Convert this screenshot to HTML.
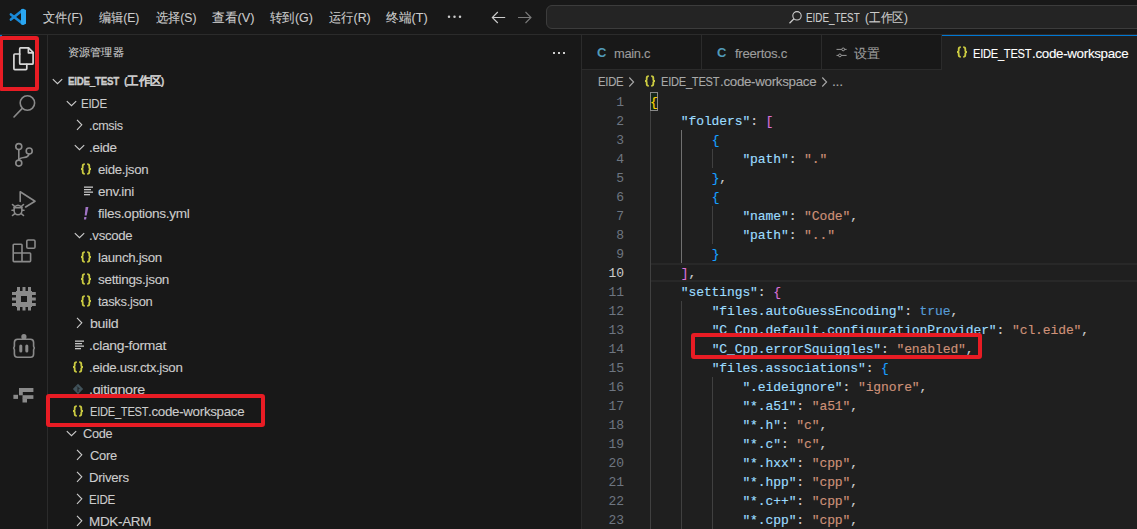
<!DOCTYPE html>
<html><head><meta charset="utf-8">
<style>
*{box-sizing:border-box}
html,body{margin:0;padding:0}
body{width:1137px;height:529px;overflow:hidden;background:#181818;position:relative;font-family:"Liberation Sans",sans-serif;color:#cccccc}
.a{position:absolute}
.ui{position:absolute;font-size:12.5px;letter-spacing:-0.3px;white-space:nowrap;line-height:22px;height:22px;-webkit-text-stroke:0.1px currentColor}
.menu{position:absolute;top:6px;height:22px;line-height:22px;font-size:12.5px;color:#cccccc;white-space:nowrap}
.code{position:absolute;left:650px;font-family:"Liberation Mono",monospace;font-size:13px;letter-spacing:-0.1px;white-space:pre;line-height:19px;color:#cccccc;-webkit-text-stroke:0.15px currentColor}
.ln{position:absolute;left:582px;width:42px;text-align:right;font-family:"Liberation Mono",monospace;font-size:13px;letter-spacing:-0.1px;line-height:19px;color:#6e7681}
.k{color:#9cdcfe}.s{color:#ce9178}.b1{color:#ffd700}.b2{color:#da70d6}.b3{color:#179fff}.kw{color:#569cd6}
.guide{position:absolute;width:1px;background:#404040}
.redbox{position:absolute;border:4px solid #e81c24;border-radius:3px}
</style></head><body>
<div class="a" style="left:0;top:34px;width:1137px;height:1px;background:#2b2b2b"></div>
<svg class="a" style="left:0;top:0" width="40" height="34" viewBox="0 0 40 34">
  <g stroke="#1a8ad8" stroke-width="2.6" stroke-linecap="round"><path d="M10.9 14.4 L22.5 23.6"/><path d="M10.9 19.6 L22.5 10.2"/></g>
  <path d="M21 9.6 L23.3 8.7 L26 10 V23.8 L23.3 25.1 L21 24.2 Z" fill="#2aa6f0"/>
</svg>
<div class="ui" style="left:43.2px;top:7px;color:#cccccc;font-size:13px;letter-spacing:0px;transform:scaleX(0.9368);transform-origin:0 0">文件(F)</div>
<div class="ui" style="left:99.0px;top:7px;color:#cccccc;font-size:13px;letter-spacing:0px;transform:scaleX(0.9302);transform-origin:0 0">编辑(E)</div>
<div class="ui" style="left:155.8px;top:7px;color:#cccccc;font-size:13px;letter-spacing:0px;transform:scaleX(0.9349);transform-origin:0 0">选择(S)</div>
<div class="ui" style="left:212.2px;top:7px;color:#cccccc;font-size:13px;letter-spacing:0px;transform:scaleX(0.9837);transform-origin:0 0">查看(V)</div>
<div class="ui" style="left:270.3px;top:7px;color:#cccccc;font-size:13px;letter-spacing:0px;transform:scaleX(0.9586);transform-origin:0 0">转到(G)</div>
<div class="ui" style="left:329.2px;top:7px;color:#cccccc;font-size:13px;letter-spacing:0px;transform:scaleX(0.947);transform-origin:0 0">运行(R)</div>
<div class="ui" style="left:386.2px;top:7px;color:#cccccc;font-size:13px;letter-spacing:0px;transform:scaleX(0.9771);transform-origin:0 0">终端(T)</div>
<svg class="a" style="left:440px;top:10px" width="30" height="14" viewBox="440 10 30 14"><g fill="#cccccc"><circle cx="449" cy="16.7" r="1.25"/><circle cx="454.5" cy="16.7" r="1.25"/><circle cx="460" cy="16.7" r="1.25"/></g></svg>
<svg class="a" style="left:480px;top:0" width="60" height="34" viewBox="480 0 60 34"><path d="M497.8 12 L492.3 17.5 L497.8 23 M492.5 17.5 H505.2" fill="none" stroke="#cccccc" stroke-width="1.1"/><path d="M525.5 12 L531 17.5 L525.5 23 M530.8 17.5 H518" fill="none" stroke="#7a7a7a" stroke-width="1.1"/></svg>
<div class="a" style="left:546px;top:5px;width:620px;height:24px;background:#242424;border:1px solid #3c3c3c;border-radius:6px"></div>
<svg class="a" style="left:788px;top:10px" width="15" height="15" viewBox="0 0 15 15"><circle cx="9" cy="5.8" r="4.2" fill="none" stroke="#cccccc" stroke-width="1.1"/><path d="M6 8.8 L1.5 13.3" stroke="#cccccc" stroke-width="1.3"/></svg>
<div class="ui" style="left:806.24px;top:7px;color:#cccccc;font-size:13px;letter-spacing:0px;transform:scaleX(0.7587);transform-origin:0 0">EIDE_TEST</div>
<div class="ui" style="left:865.0px;top:7px;color:#cccccc;font-size:13px;letter-spacing:0px;transform:scaleX(0.898);transform-origin:0 0">(工作区)</div>
<div class="a" style="left:47px;top:35px;width:1px;height:494px;background:#2b2b2b"></div>
<div class="a" style="left:0;top:35px;width:2px;height:48px;background:#0078d4"></div>
<svg class="a" style="left:0;top:35px" width="48" height="400" viewBox="0 35 48 400" fill="none" stroke-linejoin="round" stroke-linecap="round">
  <g stroke="#d7d7d7" stroke-width="1.7">
    <path d="M20.5 47.9 H28.6 L33.1 52.4 V63.2 Q33.1 64.2 32.1 64.2 H20.5 Q19.7 64.2 19.7 63.2 V48.9 Q19.7 47.9 20.5 47.9 Z"/>
    <path d="M28.4 48.2 V52.8 H33"/>
    <path d="M19.7 54 H14.8 Q13.9 54 13.9 55 V68.6 Q13.9 69.6 14.8 69.6 H25.8 Q26.8 69.6 26.8 68.6 V64.3"/>
  </g>
  <g stroke="#8a8a8a" stroke-width="1.6">
    <circle cx="27.4" cy="103" r="7.2"/>
    <path d="M22 108.6 L14 117"/>
  </g>
  <g stroke="#8a8a8a" stroke-width="1.6">
    <circle cx="18.8" cy="146.6" r="3.0"/>
    <circle cx="29.2" cy="151" r="3.0"/>
    <circle cx="18.8" cy="163.1" r="3.0"/>
    <path d="M18.8 149.6 V160.1"/>
    <path d="M29 154 Q28.5 157 24 157.5 Q19.5 158 18.8 160"/>
  </g>
  <g stroke="#8a8a8a" stroke-width="1.6">
    <path d="M20.2 201.4 V191.8 L35 201.2 L25.6 207"/>
    <ellipse cx="18" cy="210" rx="4" ry="4.8"/>
    <path d="M14 207.6 H22 M12.5 204.5 L14.5 206.3 M23.5 204.5 L21.5 206.3 M12 210.2 H14 M22 210.2 H24 M12.5 215.5 L14.5 213.8 M23.5 215.5 L21.5 213.8"/>
  </g>
  <g stroke="#8a8a8a" stroke-width="1.6">
    <rect x="26.8" y="240" width="8.2" height="8.2" rx="1.3"/>
    <path d="M22 253 V245 Q22 244.3 21.2 244.3 H14 Q13.2 244.3 13.2 245 V260.8 Q13.2 261.6 14 261.6 H29.8 Q30.6 261.6 30.6 260.8 V253.8 Q30.6 253 29.8 253 H13.2 M22 253 V261.6"/>
  </g>
  <g fill="#8a8a8a" stroke="none">
    <path fill-rule="evenodd" d="M16 291 H32 V307 H16 Z M21 296 V302 H27 V296 Z"/>
    <rect x="17" y="287" width="3" height="4"/><rect x="22.5" y="287" width="3" height="4"/><rect x="28" y="287" width="3" height="4"/>
    <rect x="17" y="307" width="3" height="3.5"/><rect x="22.5" y="307" width="3" height="3.5"/><rect x="28" y="307" width="3" height="3.5"/>
    <rect x="12" y="292" width="4" height="3"/><rect x="12" y="297.5" width="4" height="3"/><rect x="12" y="303" width="4" height="3"/>
    <rect x="32" y="292" width="3.8" height="3"/><rect x="32" y="297.5" width="3.8" height="3"/><rect x="32" y="303" width="3.8" height="3"/>
  </g>
  <g stroke="#8a8a8a" stroke-width="1.6">
    <path d="M17.5 339.2 H30.5 Q33.6 339.2 33.6 342.5 V346.3 L34.3 348 L33.6 349.8 V354 Q33.6 357.3 30.5 357.3 H17.5 Q14.4 357.3 14.4 354 V349.8 L13.7 348 L14.4 346.3 V342.5 Q14.4 339.2 17.5 339.2 Z"/>
  </g>
  <g fill="#8a8a8a">
    <rect x="21.3" y="334" width="5.2" height="5.5" rx="2.5"/>
    <rect x="19.3" y="344.5" width="3" height="8" rx="1.5"/>
    <rect x="25.3" y="344.5" width="3" height="8" rx="1.5"/>
  </g>
  <g fill="#8a8a8a">
    <rect x="19" y="388" width="14.4" height="4"/>
    <rect x="19" y="391.5" width="3.8" height="3.8"/>
    <rect x="22.5" y="395.2" width="10.9" height="3.7"/>
    <rect x="22.5" y="398.5" width="4.5" height="4"/>
    <rect x="13.4" y="394.8" width="4.6" height="4.1"/>
  </g>
</svg>
<div class="redbox" style="left:-1px;top:36px;width:40px;height:55px"></div>
<div class="a" style="left:582px;top:69px;width:555px;height:1px;background:#2b2b2b"></div>
<div class="a" style="left:582px;top:70px;width:555px;height:459px;background:#1f1f1f"></div>
<div class="a" style="left:701px;top:35px;width:1px;height:34px;background:#2b2b2b"></div>
<div class="a" style="left:821px;top:35px;width:1px;height:34px;background:#2b2b2b"></div>
<div class="a" style="left:941px;top:35px;width:1px;height:34px;background:#2b2b2b"></div>
<div class="a" style="left:942px;top:35px;width:195px;height:35px;background:#1f1f1f"></div>
<div class="a" style="left:942px;top:35px;width:195px;height:1px;background:#0078d4"></div>
<div class="a" style="left:597px;top:42px;font-size:13px;font-weight:bold;color:#519aba;line-height:22px">C</div>
<div class="ui" style="left:614.3px;top:43px;color:#9d9d9d;font-size:13px;letter-spacing:-0.3px;transform:scaleX(0.9896);transform-origin:0 0">main.c</div>
<div class="a" style="left:717px;top:42px;font-size:13px;font-weight:bold;color:#519aba;line-height:22px">C</div>
<div class="ui" style="left:734.6px;top:43px;color:#9d9d9d;font-size:13px;letter-spacing:-0.3px;transform:scaleX(1.0157);transform-origin:0 0">freertos.c</div>
<svg class="a" style="left:836px;top:46px" width="12" height="12" viewBox="0 0 12 12"><g stroke="#a8a8a8" stroke-width="0.9" fill="none"><path d="M0.5 3.4 H5.7 M8.7 3.4 H10.6 M0.5 9.4 H2.4 M5.4 9.4 H10.6"/><circle cx="7.2" cy="3.4" r="1.4"/><circle cx="3.9" cy="9.4" r="1.4"/></g></svg>
<div class="ui" style="left:854.0px;top:43px;color:#9d9d9d;font-size:13px;letter-spacing:0px">设置</div>
<svg class="a" style="left:956px;top:46px" width="13" height="13" viewBox="0 0 13 13"><g fill="none" stroke="#cbcb41" stroke-width="1.8"><path d="M4.8 1.2 Q2.7 1.2 2.7 3 V4.7 Q2.7 6 1 6 Q2.7 6 2.7 7.3 V9 Q2.7 10.9 4.8 10.9"/><path d="M7.2 1.2 Q9.3 1.2 9.3 3 V4.7 Q9.3 6 11 6 Q9.3 6 9.3 7.3 V9 Q9.3 10.9 7.2 10.9"/></g></svg>
<div class="ui" style="left:973.34px;top:43px;color:#ffffff;font-size:13px;letter-spacing:-0.3px;transform:scaleX(0.8554);transform-origin:0 0">EIDE_TEST</div>
<div class="ui" style="left:1031.57px;top:43px;color:#ffffff;font-size:13px;letter-spacing:-0.3px;transform:scaleX(1.0276);transform-origin:0 0">.code-workspace</div>
<div class="ui" style="left:597.53px;top:71px;color:#a9a9a9;font-size:13px;letter-spacing:-0.3px;transform:scaleX(0.8689);transform-origin:0 0">EIDE</div>
<svg class="a" style="left:628px;top:76px" width="8" height="12" viewBox="0 0 8 12"><path d="M1.3 1.5 L5.6 6 L1.3 10.5" fill="none" stroke="#a9a9a9" stroke-width="1.1"/></svg>
<svg class="a" style="left:644px;top:75px" width="13" height="13" viewBox="0 0 13 13"><g fill="none" stroke="#cbcb41" stroke-width="1.8"><path d="M4.8 1.2 Q2.7 1.2 2.7 3 V4.7 Q2.7 6 1 6 Q2.7 6 2.7 7.3 V9 Q2.7 10.9 4.8 10.9"/><path d="M7.2 1.2 Q9.3 1.2 9.3 3 V4.7 Q9.3 6 11 6 Q9.3 6 9.3 7.3 V9 Q9.3 10.9 7.2 10.9"/></g></svg>
<div class="ui" style="left:661.34px;top:71px;color:#a9a9a9;font-size:13px;letter-spacing:-0.3px;transform:scaleX(0.8554);transform-origin:0 0">EIDE_TEST</div>
<div class="ui" style="left:719.57px;top:71px;color:#a9a9a9;font-size:13px;letter-spacing:-0.3px;transform:scaleX(1.0265);transform-origin:0 0">.code-workspace</div>
<svg class="a" style="left:821px;top:76px" width="8" height="12" viewBox="0 0 8 12"><path d="M1.3 1.5 L5.6 6 L1.3 10.5" fill="none" stroke="#a9a9a9" stroke-width="1.1"/></svg>
<div class="ui" style="left:831.92px;top:71px;color:#a9a9a9;font-size:13px;letter-spacing:-0.3px;transform:scaleX(1.0784);transform-origin:0 0">...</div>
<div class="a" style="left:650px;top:263px;width:487px;height:19px;border-top:2px solid #282828;border-bottom:2px solid #282828"></div>
<div class="guide" style="left:650px;top:111px;height:418px;background:#404040"></div>
<div class="guide" style="left:681px;top:130px;height:133px;background:#707070"></div>
<div class="guide" style="left:681px;top:301px;height:228px;background:#404040"></div>
<div class="guide" style="left:712px;top:149px;height:19px;background:#404040"></div>
<div class="guide" style="left:712px;top:206px;height:38px;background:#404040"></div>
<div class="guide" style="left:712px;top:377px;height:152px;background:#404040"></div>
<div class="a" style="left:650px;top:92px;width:8px;height:19px;border:1px solid #888888;background:#16261a"></div>
<div class="ln" style="top:93px;color:#6e7681">1</div>
<div class="code" style="top:93px"><span class="b1">{</span></div>
<div class="ln" style="top:112px;color:#6e7681">2</div>
<div class="code" style="top:112px">    <span class="k">"folders"</span>: <span class="b2">[</span></div>
<div class="ln" style="top:131px;color:#6e7681">3</div>
<div class="code" style="top:131px">        <span class="b3">{</span></div>
<div class="ln" style="top:150px;color:#6e7681">4</div>
<div class="code" style="top:150px">            <span class="k">"path"</span>: <span class="s">"."</span></div>
<div class="ln" style="top:169px;color:#6e7681">5</div>
<div class="code" style="top:169px">        <span class="b3">}</span>,</div>
<div class="ln" style="top:188px;color:#6e7681">6</div>
<div class="code" style="top:188px">        <span class="b3">{</span></div>
<div class="ln" style="top:207px;color:#6e7681">7</div>
<div class="code" style="top:207px">            <span class="k">"name"</span>: <span class="s">"Code"</span>,</div>
<div class="ln" style="top:226px;color:#6e7681">8</div>
<div class="code" style="top:226px">            <span class="k">"path"</span>: <span class="s">".."</span></div>
<div class="ln" style="top:245px;color:#6e7681">9</div>
<div class="code" style="top:245px">        <span class="b3">}</span></div>
<div class="ln" style="top:264px;color:#cccccc">10</div>
<div class="code" style="top:264px">    <span class="b2">]</span>,</div>
<div class="ln" style="top:283px;color:#6e7681">11</div>
<div class="code" style="top:283px">    <span class="k">"settings"</span>: <span class="b2">{</span></div>
<div class="ln" style="top:302px;color:#6e7681">12</div>
<div class="code" style="top:302px">        <span class="k">"files.autoGuessEncoding"</span>: <span class="kw">true</span>,</div>
<div class="ln" style="top:321px;color:#6e7681">13</div>
<div class="code" style="top:321px">        <span class="k">"C_Cpp.default.configurationProvider"</span>: <span class="s">"cl.eide"</span>,</div>
<div class="ln" style="top:340px;color:#6e7681">14</div>
<div class="code" style="top:340px">        <span class="k">"C_Cpp.errorSquiggles"</span>: <span class="s">"enabled"</span>,</div>
<div class="ln" style="top:359px;color:#6e7681">15</div>
<div class="code" style="top:359px">        <span class="k">"files.associations"</span>: <span class="b3">{</span></div>
<div class="ln" style="top:378px;color:#6e7681">16</div>
<div class="code" style="top:378px">            <span class="k">".eideignore"</span>: <span class="s">"ignore"</span>,</div>
<div class="ln" style="top:397px;color:#6e7681">17</div>
<div class="code" style="top:397px">            <span class="k">"*.a51"</span>: <span class="s">"a51"</span>,</div>
<div class="ln" style="top:416px;color:#6e7681">18</div>
<div class="code" style="top:416px">            <span class="k">"*.h"</span>: <span class="s">"c"</span>,</div>
<div class="ln" style="top:435px;color:#6e7681">19</div>
<div class="code" style="top:435px">            <span class="k">"*.c"</span>: <span class="s">"c"</span>,</div>
<div class="ln" style="top:454px;color:#6e7681">20</div>
<div class="code" style="top:454px">            <span class="k">"*.hxx"</span>: <span class="s">"cpp"</span>,</div>
<div class="ln" style="top:473px;color:#6e7681">21</div>
<div class="code" style="top:473px">            <span class="k">"*.hpp"</span>: <span class="s">"cpp"</span>,</div>
<div class="ln" style="top:492px;color:#6e7681">22</div>
<div class="code" style="top:492px">            <span class="k">"*.c++"</span>: <span class="s">"cpp"</span>,</div>
<div class="ln" style="top:511px;color:#6e7681">23</div>
<div class="code" style="top:511px">            <span class="k">"*.cpp"</span>: <span class="s">"cpp"</span>,</div>
<div class="redbox" style="left:691px;top:333px;width:291px;height:26px"></div>
<div class="a" style="left:581px;top:35px;width:1px;height:494px;background:#2b2b2b"></div>
<div class="ui" style="left:68.0px;top:41px;color:#cccccc;font-size:11px;letter-spacing:0px;transform:scaleX(1.0127);transform-origin:0 0">资源管理器</div>
<div class="a" style="left:553px;top:52px;width:2px;height:2px;background:#cccccc"></div>
<div class="a" style="left:558px;top:52px;width:2px;height:2px;background:#cccccc"></div>
<div class="a" style="left:563px;top:52px;width:2px;height:2px;background:#cccccc"></div>
<div class="ui" style="left:68.4px;top:70px;color:#cccccc;font-size:11.5px;letter-spacing:-0.3px;font-weight:bold;transform:scaleX(0.8505);transform-origin:0 0;-webkit-text-stroke:0.35px currentColor">EIDE_TEST</div>
<div class="ui" style="left:124.4px;top:70px;color:#cccccc;font-size:11.5px;letter-spacing:-0.3px;font-weight:bold;transform:scaleX(0.9524);transform-origin:0 0">(工作区)</div>
<svg class="a" style="left:52px;top:75px" width="11" height="11" viewBox="0 0 11 11"><path d="M0.8 4.1 L5.5 8.7 L10.2 4.1" fill="none" stroke="#cccccc" stroke-width="1.1"/></svg>
<div class="ui" style="left:81.41px;top:93px;color:#cccccc;font-size:13px;letter-spacing:-0.3px;transform:scaleX(0.8863);transform-origin:0 0">EIDE</div>
<svg class="a" style="left:66px;top:97px" width="11" height="11" viewBox="0 0 11 11"><path d="M0.8 4.1 L5.5 8.7 L10.2 4.1" fill="none" stroke="#cccccc" stroke-width="1.1"/></svg>
<div class="ui" style="left:89.44px;top:115px;color:#cccccc;font-size:13px;letter-spacing:-0.3px;transform:scaleX(0.9647);transform-origin:0 0">.cmsis</div>
<svg class="a" style="left:76px;top:119px" width="8" height="12" viewBox="0 0 8 12"><path d="M1 0.8 L5.8 5.8 L1 10.8" fill="none" stroke="#cccccc" stroke-width="1.1"/></svg>
<div class="ui" style="left:89.36px;top:137px;color:#cccccc;font-size:13px;letter-spacing:-0.3px;transform:scaleX(1.0404);transform-origin:0 0">.eide</div>
<svg class="a" style="left:74px;top:141px" width="11" height="11" viewBox="0 0 11 11"><path d="M0.8 4.1 L5.5 8.7 L10.2 4.1" fill="none" stroke="#cccccc" stroke-width="1.1"/></svg>
<div class="ui" style="left:98.0px;top:159px;color:#cccccc;font-size:13px;letter-spacing:-0.3px;transform:scaleX(1.0201);transform-origin:0 0">eide.json</div>
<svg class="a" style="left:80px;top:163px" width="13" height="13" viewBox="0 0 13 13"><g fill="none" stroke="#cbcb41" stroke-width="1.8"><path d="M4.8 1.2 Q2.7 1.2 2.7 3 V4.7 Q2.7 6 1 6 Q2.7 6 2.7 7.3 V9 Q2.7 10.9 4.8 10.9"/><path d="M7.2 1.2 Q9.3 1.2 9.3 3 V4.7 Q9.3 6 11 6 Q9.3 6 9.3 7.3 V9 Q9.3 10.9 7.2 10.9"/></g></svg>
<div class="ui" style="left:98.0px;top:181px;color:#cccccc;font-size:13px;letter-spacing:-0.3px;transform:scaleX(1.0422);transform-origin:0 0">env.ini</div>
<svg class="a" style="left:84px;top:186px" width="10" height="10" viewBox="0 0 10 10"><g fill="#c5c5c5"><rect x="0" y="0.5" width="9" height="1.3"/><rect x="0" y="3" width="7" height="1.3"/><rect x="0" y="5.5" width="9" height="1.3"/><rect x="0" y="8" width="6" height="1.3"/></g></svg>
<div class="ui" style="left:98.0px;top:203px;color:#cccccc;font-size:13px;letter-spacing:-0.3px;transform:scaleX(1.0479);transform-origin:0 0">files.options.yml</div>
<svg class="a" style="left:83px;top:207px" width="6" height="13" viewBox="0 0 6 13"><path d="M2.6 0 H5.4 L3.7 8.6 H1.7 Z M1.3 10 H3.5 L3.1 12.4 H0.9 Z" fill="#a074c4"/></svg>
<div class="ui" style="left:89.38px;top:225px;color:#cccccc;font-size:13px;letter-spacing:-0.3px;transform:scaleX(1.015);transform-origin:0 0">.vscode</div>
<svg class="a" style="left:74px;top:229px" width="11" height="11" viewBox="0 0 11 11"><path d="M0.8 4.1 L5.5 8.7 L10.2 4.1" fill="none" stroke="#cccccc" stroke-width="1.1"/></svg>
<div class="ui" style="left:98.0px;top:247px;color:#cccccc;font-size:13px;letter-spacing:-0.3px;transform:scaleX(1.0218);transform-origin:0 0">launch.json</div>
<svg class="a" style="left:80px;top:251px" width="13" height="13" viewBox="0 0 13 13"><g fill="none" stroke="#cbcb41" stroke-width="1.8"><path d="M4.8 1.2 Q2.7 1.2 2.7 3 V4.7 Q2.7 6 1 6 Q2.7 6 2.7 7.3 V9 Q2.7 10.9 4.8 10.9"/><path d="M7.2 1.2 Q9.3 1.2 9.3 3 V4.7 Q9.3 6 11 6 Q9.3 6 9.3 7.3 V9 Q9.3 10.9 7.2 10.9"/></g></svg>
<div class="ui" style="left:98.0px;top:269px;color:#cccccc;font-size:13px;letter-spacing:-0.3px;transform:scaleX(1.039);transform-origin:0 0">settings.json</div>
<svg class="a" style="left:80px;top:273px" width="13" height="13" viewBox="0 0 13 13"><g fill="none" stroke="#cbcb41" stroke-width="1.8"><path d="M4.8 1.2 Q2.7 1.2 2.7 3 V4.7 Q2.7 6 1 6 Q2.7 6 2.7 7.3 V9 Q2.7 10.9 4.8 10.9"/><path d="M7.2 1.2 Q9.3 1.2 9.3 3 V4.7 Q9.3 6 11 6 Q9.3 6 9.3 7.3 V9 Q9.3 10.9 7.2 10.9"/></g></svg>
<div class="ui" style="left:98.0px;top:291px;color:#cccccc;font-size:13px;letter-spacing:-0.3px;transform:scaleX(0.9932);transform-origin:0 0">tasks.json</div>
<svg class="a" style="left:80px;top:295px" width="13" height="13" viewBox="0 0 13 13"><g fill="none" stroke="#cbcb41" stroke-width="1.8"><path d="M4.8 1.2 Q2.7 1.2 2.7 3 V4.7 Q2.7 6 1 6 Q2.7 6 2.7 7.3 V9 Q2.7 10.9 4.8 10.9"/><path d="M7.2 1.2 Q9.3 1.2 9.3 3 V4.7 Q9.3 6 11 6 Q9.3 6 9.3 7.3 V9 Q9.3 10.9 7.2 10.9"/></g></svg>
<div class="ui" style="left:90.4px;top:313px;color:#cccccc;font-size:13px;letter-spacing:-0.3px;transform:scaleX(1.0908);transform-origin:0 0">build</div>
<svg class="a" style="left:76px;top:317px" width="8" height="12" viewBox="0 0 8 12"><path d="M1 0.8 L5.8 5.8 L1 10.8" fill="none" stroke="#cccccc" stroke-width="1.1"/></svg>
<div class="ui" style="left:89.33px;top:335px;color:#cccccc;font-size:13px;letter-spacing:-0.3px;transform:scaleX(1.0691);transform-origin:0 0">.clang-format</div>
<svg class="a" style="left:75px;top:340px" width="10" height="10" viewBox="0 0 10 10"><g fill="#c5c5c5"><rect x="0" y="0.5" width="9" height="1.3"/><rect x="0" y="3" width="7" height="1.3"/><rect x="0" y="5.5" width="9" height="1.3"/><rect x="0" y="8" width="6" height="1.3"/></g></svg>
<div class="ui" style="left:89.38px;top:357px;color:#cccccc;font-size:13px;letter-spacing:-0.3px;transform:scaleX(1.0232);transform-origin:0 0">.eide.usr.ctx.json</div>
<svg class="a" style="left:72px;top:361px" width="13" height="13" viewBox="0 0 13 13"><g fill="none" stroke="#cbcb41" stroke-width="1.8"><path d="M4.8 1.2 Q2.7 1.2 2.7 3 V4.7 Q2.7 6 1 6 Q2.7 6 2.7 7.3 V9 Q2.7 10.9 4.8 10.9"/><path d="M7.2 1.2 Q9.3 1.2 9.3 3 V4.7 Q9.3 6 11 6 Q9.3 6 9.3 7.3 V9 Q9.3 10.9 7.2 10.9"/></g></svg>
<div class="ui" style="left:89.29px;top:379px;color:#cccccc;font-size:13px;letter-spacing:-0.3px;transform:scaleX(1.106);transform-origin:0 0">.gitignore</div>
<svg class="a" style="left:72px;top:383px" width="12" height="12" viewBox="0 0 12 12"><path d="M6 0.8 L11.2 6 L6 11.2 L0.8 6 Z" fill="#41535b"/><path d="M5 3.5 L7.5 6 M6 5 V9" stroke="#181818" stroke-width="0.9"/></svg>
<div class="ui" style="left:89.74px;top:401px;color:#cccccc;font-size:13px;letter-spacing:-0.3px;transform:scaleX(0.8554);transform-origin:0 0">EIDE_TEST</div>
<div class="ui" style="left:147.97px;top:401px;color:#cccccc;font-size:13px;letter-spacing:-0.3px;transform:scaleX(1.0276);transform-origin:0 0">.code-workspace</div>
<svg class="a" style="left:72px;top:405px" width="13" height="13" viewBox="0 0 13 13"><g fill="none" stroke="#cbcb41" stroke-width="1.8"><path d="M4.8 1.2 Q2.7 1.2 2.7 3 V4.7 Q2.7 6 1 6 Q2.7 6 2.7 7.3 V9 Q2.7 10.9 4.8 10.9"/><path d="M7.2 1.2 Q9.3 1.2 9.3 3 V4.7 Q9.3 6 11 6 Q9.3 6 9.3 7.3 V9 Q9.3 10.9 7.2 10.9"/></g></svg>
<div class="ui" style="left:82.5px;top:423px;color:#cccccc;font-size:13px;letter-spacing:-0.3px;transform:scaleX(0.9817);transform-origin:0 0">Code</div>
<svg class="a" style="left:66px;top:427px" width="11" height="11" viewBox="0 0 11 11"><path d="M0.8 4.1 L5.5 8.7 L10.2 4.1" fill="none" stroke="#cccccc" stroke-width="1.1"/></svg>
<div class="ui" style="left:90.1px;top:445px;color:#cccccc;font-size:13px;letter-spacing:-0.3px;transform:scaleX(0.9946);transform-origin:0 0">Core</div>
<svg class="a" style="left:76px;top:449px" width="8" height="12" viewBox="0 0 8 12"><path d="M1 0.8 L5.8 5.8 L1 10.8" fill="none" stroke="#cccccc" stroke-width="1.1"/></svg>
<div class="ui" style="left:89.08px;top:467px;color:#cccccc;font-size:13px;letter-spacing:-0.3px;transform:scaleX(1.0163);transform-origin:0 0">Drivers</div>
<svg class="a" style="left:76px;top:471px" width="8" height="12" viewBox="0 0 8 12"><path d="M1 0.8 L5.8 5.8 L1 10.8" fill="none" stroke="#cccccc" stroke-width="1.1"/></svg>
<div class="ui" style="left:89.21px;top:489px;color:#cccccc;font-size:13px;letter-spacing:-0.3px;transform:scaleX(0.8898);transform-origin:0 0">EIDE</div>
<svg class="a" style="left:76px;top:493px" width="8" height="12" viewBox="0 0 8 12"><path d="M1 0.8 L5.8 5.8 L1 10.8" fill="none" stroke="#cccccc" stroke-width="1.1"/></svg>
<div class="ui" style="left:89.06px;top:511px;color:#cccccc;font-size:13px;letter-spacing:-0.3px;transform:scaleX(1.0363);transform-origin:0 0">MDK-ARM</div>
<svg class="a" style="left:76px;top:515px" width="8" height="12" viewBox="0 0 8 12"><path d="M1 0.8 L5.8 5.8 L1 10.8" fill="none" stroke="#cccccc" stroke-width="1.1"/></svg>
<div class="redbox" style="left:46px;top:394px;width:219px;height:33px"></div>
</body></html>
